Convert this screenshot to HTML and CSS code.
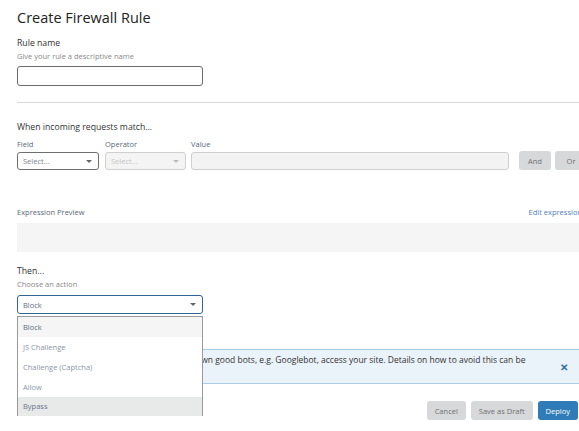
FILE: index.html
```html
<!DOCTYPE html>
<html>
<head>
<meta charset="utf-8">
<link rel="stylesheet" href="styles.css">
</head>
<body>
<div class="page">
  <h1 class="title">Create Firewall Rule</h1>

  <div class="label">Rule name</div>
  <div class="hint">Give your rule a descriptive name</div>
  <div class="text-input"></div>

  <div class="divider"></div>

  <div class="label section">When incoming requests match...</div>
  <div class="match-row">
    <div class="col col-field">
      <div class="small-label">Field</div>
      <div class="select active"><span>Select...</span><span class="caret"></span></div>
    </div>
    <div class="col col-op">
      <div class="small-label">Operator</div>
      <div class="select disabled"><span>Select...</span><span class="caret"></span></div>
    </div>
    <div class="col col-value">
      <div class="small-label">Value</div>
      <div class="value-input"></div>
    </div>
    <div class="btn gray logic">And</div>
    <div class="btn gray logic">Or</div>
  </div>

  <div class="preview-head">
    <span class="small-label">Expression Preview</span>
    <span class="link">Edit expression</span>
  </div>
  <div class="preview-box"></div>

  <div class="label then">Then...</div>
  <div class="hint">Choose an action</div>
  <div class="action-wrap">
    <div class="select focused action"><span>Block</span><span class="caret"></span></div>
    <ul class="menu">
      <li class="sel">Block</li>
      <li>JS Challenge</li>
      <li>Challenge (Captcha)</li>
      <li>Allow</li>
      <li class="hover">Bypass</li>
    </ul>
  </div>

  <div class="banner">
    <p>Please note that this action may prevent known good bots, e.g. Googlebot, access your site. Details on how to avoid this can be found here.</p>
    <span class="close">&#x2715;</span>
  </div>

  <div class="footer">
    <div class="btn gray">Cancel</div>
    <div class="btn gray">Save as Draft</div>
    <div class="btn blue">Deploy</div>
  </div>
</div>
</body>
</html>
```
FILE: styles.css
```css
html, body {
  margin: 0;
  padding: 0;
  background: #fff;
  overflow: hidden;
}
body {
  font-family: "Open Sans", "Noto Sans", sans-serif;
  color: #333;
  width: 579px;
  height: 431px;
}
.page {
  padding: 7px 1px 0 17px;
  width: 561px;
}
.title {
  margin: 0;
  font-size: 14.5px;
  font-weight: 400;
  line-height: 22px;
  color: #222;
}
.label {
  font-size: 8.7px;
  line-height: 12px;
  color: #333;
  margin-top: 8px;
}
.hint {
  font-size: 7.5px;
  line-height: 11px;
  color: #888;
  margin-top: 2px;
}
.text-input {
  margin-top: 4px;
  width: 184px;
  height: 18px;
  border: 1px solid #6b6b6b;
  border-radius: 3px;
}
.divider {
  margin-top: 16px;
  height: 1px;
  background: #d9d9d9;
  margin-right: -30px;
}
.section {
  margin-top: 18px;
}
.match-row {
  display: flex;
  align-items: flex-end;
  margin-top: 6px;
  width: 600px;
}
.col { display: flex; flex-direction: column; }
.col-field { width: 82px; margin-right: 6px; }
.col-op { width: 81px; margin-right: 5px; }
.col-value { width: 318px; margin-right: 10px; }
.small-label {
  font-size: 7.5px;
  line-height: 11px;
  color: #5a6878;
  margin-bottom: 2px;
}
.select {
  height: 17px;
  border-radius: 3px;
  display: flex;
  align-items: center;
  justify-content: space-between;
  padding: 0 6px 0 5px;
  font-size: 7.5px;
  box-sizing: border-box;
}
.select.active {
  border: 1px solid #6e6e6e;
  color: #7a8594;
  height: 18px;
}
.select.disabled {
  border: 1px solid #cfcfcf;
  background: #f4f4f4;
  color: #c4c4c4;
  height: 18px;
}
.caret {
  width: 0;
  height: 0;
  border-left: 3px solid transparent;
  border-right: 3px solid transparent;
  border-top: 3px solid #666;
}
.disabled .caret { border-top-color: #bbb; }
.value-input {
  height: 18px;
  border: 1px solid #cfcfcf;
  background: #f3f3f3;
  border-radius: 3px;
  box-sizing: border-box;
}
.btn {
  height: 19px;
  border-radius: 3px;
  display: flex;
  align-items: center;
  justify-content: center;
  font-size: 7.5px;
  box-sizing: border-box;
}
.btn.gray {
  background: #d7d8da;
  color: #707070;
}
.logic { width: 32px; margin-right: 4px; }
.btn.blue {
  background: #2f7cb8;
  color: #fff;
}
.preview-head {
  display: flex;
  justify-content: space-between;
  margin-top: 37px;
  width: 565px;
  align-items: baseline;
}
.preview-head .small-label { margin-bottom: 0; }
.link {
  font-size: 7.5px;
  line-height: 11px;
  color: #4c82ba;
  white-space: nowrap;
}
.preview-box {
  margin-top: 5px;
  height: 29px;
  background: #f5f5f5;
  margin-right: -30px;
}
.then { margin-top: 13px; }
.action-wrap {
  position: relative;
  margin-top: 5px;
  width: 186px;
}
.select.action {
  height: 19px;
  border: 1px solid #2f6896;
  color: #5e6c80;
  font-size: 7.5px;
}
.menu {
  position: absolute;
  top: 21px;
  left: 0;
  width: 186px;
  margin: 0;
  padding: 0;
  list-style: none;
  background: #fff;
  border: 1px solid #999;
  border-bottom: none;
  box-sizing: border-box;
  z-index: 2;
}
.menu li {
  height: 20px;
  line-height: 20px;
  padding-left: 5px;
  font-size: 7.5px;
  color: #8a96a6;
}
.menu li.sel {
  background: #f5f5f5;
  color: #5e6c80;
}
.menu li.hover {
  background: #e8e9e9;
  color: #6a7686;
  height: 19px;
  line-height: 19px;
}
.banner {
  margin-top: 35px;
  margin-right: -20px;
  height: 35px;
  box-sizing: border-box;
  background: #eaf2fa;
  border-top: 1px solid #a9cce8;
  border-bottom: 1px solid #a9cce8;
  position: relative;
  padding: 3px 0 0 8px;
}
.banner p {
  margin: 0;
  width: 515px;
  font-size: 8.5px;
  line-height: 14px;
  color: #333;
}
.close {
  position: absolute;
  right: 30px;
  top: 10px;
  font-size: 10px;
  font-weight: 700;
  color: #2d6ca6;
}
.footer {
  display: flex;
  justify-content: flex-end;
  gap: 5px;
  margin-top: 17px;
}
.footer .btn { padding: 0 8px; }
```
